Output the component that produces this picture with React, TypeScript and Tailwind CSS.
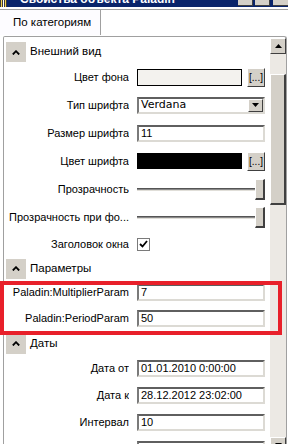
import { ReactNode } from "react";

// Property grid rows: label on the left, editor on the right
type Row =
  | { kind: "header"; title: string; h: string }
  | { kind: "prop"; label: string; h: string; editor: ReactNode };

const sunken =
  "h-[17px] border-2 border-t-[#5f5f5f] border-l-[#7a7a7a] border-r-[#dcdad4] border-b-[#dcdad4] bg-white flex items-center px-[2px]";

function DotsButton() {
  return (
    <div className="w-[18px] h-[19px] bg-[#d4d0c8] border border-t-white border-l-white border-r-[#404040] border-b-[#404040] flex items-end justify-center pb-[3px] text-[10px] leading-none">
      [...]
    </div>
  );
}

function Slider() {
  return (
    <div className="flex items-center w-full">
      <div className="flex-1 flex flex-col">
        <div className="h-[1px] bg-[#555]" />
        <div className="h-[1px] bg-[#8a8a8a]" />
        <div className="h-[1px] bg-[#e0ded8]" />
      </div>
      <div className="w-[10px] h-[21px] bg-[#d4d0c8] border border-t-white border-l-white border-r-[#404040] border-b-[#404040] border-r-2 border-b-2" />
    </div>
  );
}

const rows: Row[] = [
  { kind: "header", title: "Внешний вид", h: "h-[27px] pt-[3px]" },
  {
    kind: "prop",
    label: "Цвет фона",
    h: "h-[27px]",
    editor: (
      <div className="flex items-center gap-[5px] w-full">
        <div className="flex-1 h-[17px] border border-black bg-[#f3f2ee]" />
        <DotsButton />
      </div>
    ),
  },
  {
    kind: "prop",
    label: "Тип шрифта",
    h: "h-[28px]",
    editor: (
      <div className={sunken + " w-full pr-0"}>
        <span className="flex-1 font-['DejaVu_Sans'] text-[11px]">Verdana</span>
        <div className="w-[15px] h-[13px] bg-[#d4d0c8] border border-t-white border-l-white border-r-[#404040] border-b-[#404040] flex items-center justify-center">
          <svg width="7" height="4" viewBox="0 0 7 4">
            <path d="M0 0h7L3.5 4z" fill="#000" />
          </svg>
        </div>
      </div>
    ),
  },
  {
    kind: "prop",
    label: "Размер шрифта",
    h: "h-[28px]",
    editor: <div className={sunken + " w-full"}>11</div>,
  },
  {
    kind: "prop",
    label: "Цвет шрифта",
    h: "h-[28px]",
    editor: (
      <div className="flex items-center gap-[5px] w-full">
        <div className="flex-1 h-[16px] bg-black" />
        <DotsButton />
      </div>
    ),
  },
  { kind: "prop", label: "Прозрачность", h: "h-[29px]", editor: <Slider /> },
  { kind: "prop", label: "Прозрачность при фо...", h: "h-[27px]", editor: <Slider /> },
  {
    kind: "prop",
    label: "Заголовок окна",
    h: "h-[26px]",
    editor: (
      <div className="w-[13px] h-[13px] border border-[#7a7a7a] bg-white flex items-center justify-center">
        <svg width="9" height="8" viewBox="0 0 9 8">
          <path d="M1 4l2.5 2.5L8 1" stroke="#000" strokeWidth="1.8" fill="none" />
        </svg>
      </div>
    ),
  },
  { kind: "header", title: "Параметры", h: "h-[23px]" },
  {
    kind: "prop",
    label: "Paladin:MultiplierParam",
    h: "h-[25px]",
    editor: <div className={sunken + " w-full"}>7</div>,
  },
  {
    kind: "prop",
    label: "Paladin:PeriodParam",
    h: "h-[26px]",
    editor: <div className={sunken + " w-full"}>50</div>,
  },
  { kind: "header", title: "Даты", h: "h-[25px]" },
  {
    kind: "prop",
    label: "Дата от",
    h: "h-[25px]",
    editor: <div className={sunken + " w-full"}>01.01.2010 0:00:00</div>,
  },
  {
    kind: "prop",
    label: "Дата к",
    h: "h-[28px]",
    editor: <div className={sunken + " w-full"}>28.12.2012 23:02:00</div>,
  },
  {
    kind: "prop",
    label: "Интервал",
    h: "h-[27px]",
    editor: <div className={sunken + " w-full"}>10</div>,
  },
  {
    kind: "prop",
    label: "",
    h: "h-[26px]",
    editor: <div className={sunken + " w-full"} />,
  },
];

function Chevron() {
  return (
    <div className="w-[20px] h-[20px] bg-[#d4d0c8] flex items-center justify-center">
      <svg width="8" height="5" viewBox="0 0 8 5">
        <path d="M0.8 4.5L4 1.2l3.2 3.3" stroke="#000" strokeWidth="1.8" fill="none" />
      </svg>
    </div>
  );
}

function ScrollButton({ up }: { up: boolean }) {
  return (
    <div className="h-[16px] bg-[#d4d0c8] border border-t-white border-l-white border-r-[#404040] border-b-[#404040] flex items-center justify-center">
      <svg width="7" height="4" viewBox="0 0 7 4">
        <path d={up ? "M0 4h7L3.5 0z" : "M0 0h7L3.5 4z"} fill="#000" />
      </svg>
    </div>
  );
}

export default function App() {
  return (
    <div className="relative w-[288px] h-[444px] overflow-hidden bg-white text-black font-['Liberation_Sans',sans-serif] text-[11px]">
      {/* title bar, mostly cut off */}
      <div className="h-[7px] bg-[#0a246a] flex items-start overflow-hidden">
        <div className="w-[7px] h-[7px] flex gap-[1px] bg-[#3b3b3b] px-[1px]">
          <div className="w-[1px] h-full bg-[#f5d24a]" />
          <div className="w-[1px] h-full bg-white" />
          <div className="w-[1px] h-full bg-[#f5d24a]" />
        </div>
        <div className="ml-[13px] -mt-[8px] text-white font-bold text-[12px] leading-[14px] whitespace-nowrap">
          Свойства объекта Paladin
        </div>
        <div className="ml-auto flex gap-[2px] h-[6px]">
          <div className="w-[15px] bg-[#d4d0c8] border-r border-b border-[#404040]" />
          <div className="w-[15px] bg-[#d4d0c8] border-r border-b border-[#404040]" />
          <div className="w-[15px] ml-[1px] bg-[#d4d0c8] border-b border-[#404040]" />
        </div>
      </div>
      <div className="h-[2px]" />

      {/* tab strip */}
      <div className="h-[27px] border-t border-[#a0a0a0] flex">
        <div className="w-[101px] h-[25px] border-r border-[#a0a0a0] bg-[#fdfcff] flex items-center pl-[13px] text-[11.5px]">
          По категориям
        </div>
      </div>

      {/* property panel */}
      <div className="ml-[3px] mr-[1px] h-[420px] border-l border-t border-r border-[#a0a0a0] rounded-tr-[3px] rounded-tl-[2px] flex">
        <div className="w-[267px] flex flex-col">
          {rows.map((r, i) =>
            r.kind === "header" ? (
              <div key={i} className={`${r.h} flex items-center shrink-0`}>
                <div className="ml-[2px]">
                  <Chevron />
                </div>
                <span className="ml-[4px] text-[11.5px]">{r.title}</span>
              </div>
            ) : (
              <div key={i} className={`${r.h} flex items-center shrink-0`}>
                <div className="w-[125px] text-right whitespace-nowrap overflow-hidden text-[11px]">
                  {r.label}
                </div>
                <div className="ml-[8px] w-[128px] flex items-center">{r.editor}</div>
              </div>
            )
          )}
        </div>

        {/* vertical scrollbar */}
        <div className="w-[16px] mt-[1px] flex flex-col bg-[#ece9e4]">
          <ScrollButton up />
          <div className="h-[20px]" />
          <div className="h-[131px] bg-[#d4d0c8] border border-t-white border-l-white border-r-[#404040] border-b-[#404040] border-r-2 border-b-2" />
          <div className="flex-1" />
          <ScrollButton up={false} />
          <div className="h-[3px]" />
        </div>
      </div>

      {/* red highlight frame */}
      <div className="absolute left-0 top-[281px] w-[282px] h-[54px] border-4 border-[#e8202a]" />
    </div>
  );
}
